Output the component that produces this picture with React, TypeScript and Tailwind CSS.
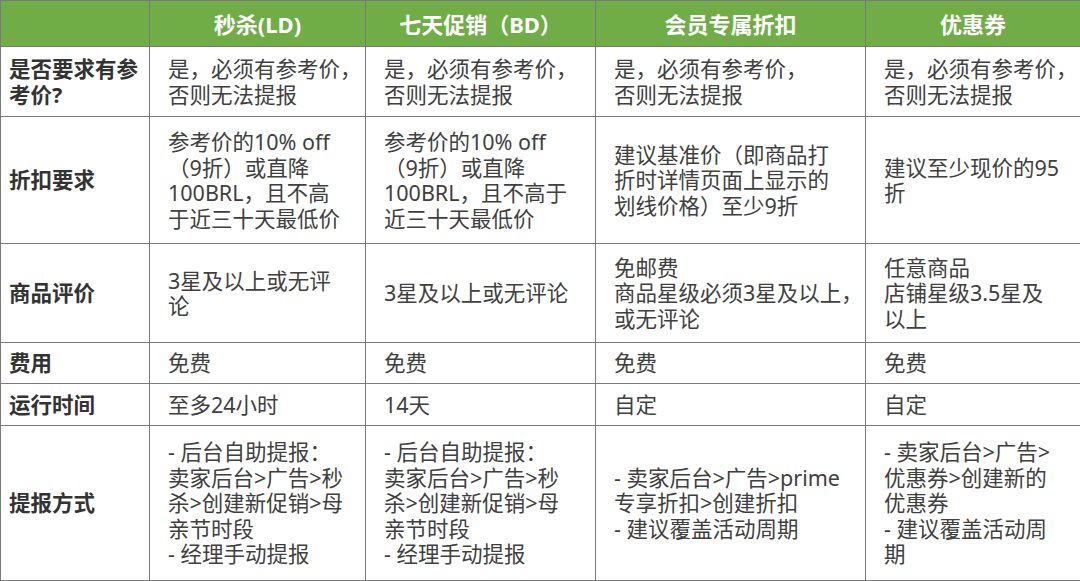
import React from 'react';

const font = { fontFamily: '"Noto Sans", "Noto Sans CJK SC", sans-serif' };

type Row = { label: string[]; cells: string[][]; h: string };

const headers = ['秒杀(LD)', '七天促销（BD）', '会员专属折扣', '优惠券'];

const rows: Row[] = [
  {
    label: ['是否要求有参', '考价?'],
    h: 'h-[70px]',
    cells: [
      ['是，必须有参考价，', '否则无法提报'],
      ['是，必须有参考价，', '否则无法提报'],
      ['是，必须有参考价，', '否则无法提报'],
      ['是，必须有参考价，', '否则无法提报'],
    ],
  },
  {
    label: ['折扣要求'],
    h: 'h-[127px]',
    cells: [
      ['参考价的10% off', '（9折）或直降', '100BRL，且不高', '于近三十天最低价'],
      ['参考价的10% off', '（9折）或直降', '100BRL，且不高于', '近三十天最低价'],
      ['建议基准价（即商品打', '折时详情页面上显示的', '划线价格）至少9折'],
      ['建议至少现价的95', '折'],
    ],
  },
  {
    label: ['商品评价'],
    h: 'h-[99px]',
    cells: [
      ['3星及以上或无评', '论'],
      ['3星及以上或无评论'],
      ['免邮费', '商品星级必须3星及以上，', '或无评论'],
      ['任意商品', '店铺星级3.5星及', '以上'],
    ],
  },
  {
    label: ['费用'],
    h: 'h-[41px]',
    cells: [['免费'], ['免费'], ['免费'], ['免费']],
  },
  {
    label: ['运行时间'],
    h: 'h-[42px]',
    cells: [['至多24小时'], ['14天'], ['自定'], ['自定']],
  },
  {
    label: ['提报方式'],
    h: 'h-[155px]',
    cells: [
      ['- 后台自助提报：', '卖家后台>广告>秒', '杀>创建新促销>母', '亲节时段', '- 经理手动提报'],
      ['- 后台自助提报：', '卖家后台>广告>秒', '杀>创建新促销>母', '亲节时段', '- 经理手动提报'],
      ['- 卖家后台>广告>prime', '专享折扣>创建折扣', '- 建议覆盖活动周期'],
      ['- 卖家后台>广告>', '优惠券>创建新的', '优惠券', '- 建议覆盖活动周', '期'],
    ],
  },
];

function Lines({ lines }: { lines: string[] }) {
  return (
    <>
      {lines.map((l, i) => (
        <div key={i} className="whitespace-nowrap">
          {l}
        </div>
      ))}
    </>
  );
}

export default function App() {
  return (
    <div className="w-[1080px] h-[581px] bg-white" style={font}>
      <table className="border-collapse table-fixed w-[1080px]">
        <colgroup>
          <col className="w-[149px]" />
          <col className="w-[216px]" />
          <col className="w-[230px]" />
          <col className="w-[270px]" />
          <col className="w-[215px]" />
        </colgroup>
        <thead>
          <tr className="h-[46px] bg-[#70ad47]">
            <th className="border border-[#7a7a7a]" />
            {headers.map((h) => (
              <th
                key={h}
                className="border border-[#7a7a7a] text-center align-middle text-[22px] font-bold text-white leading-[26px]"
              >
                {h}
              </th>
            ))}
          </tr>
        </thead>
        <tbody>
          {rows.map((r, ri) => (
            <tr key={ri} className={r.h}>
              <td className="border border-[#7a7a7a] pl-[8px] align-middle text-[21.5px] font-bold leading-[25.5px] text-[#333333]">
                <Lines lines={r.label} />
              </td>
              {r.cells.map((c, ci) => (
                <td
                  key={ci}
                  className="border border-[#7a7a7a] pl-[18px] align-middle text-[21.5px] leading-[25.5px] text-[#404040]"
                >
                  <Lines lines={c} />
                </td>
              ))}
            </tr>
          ))}
        </tbody>
      </table>
    </div>
  );
}
